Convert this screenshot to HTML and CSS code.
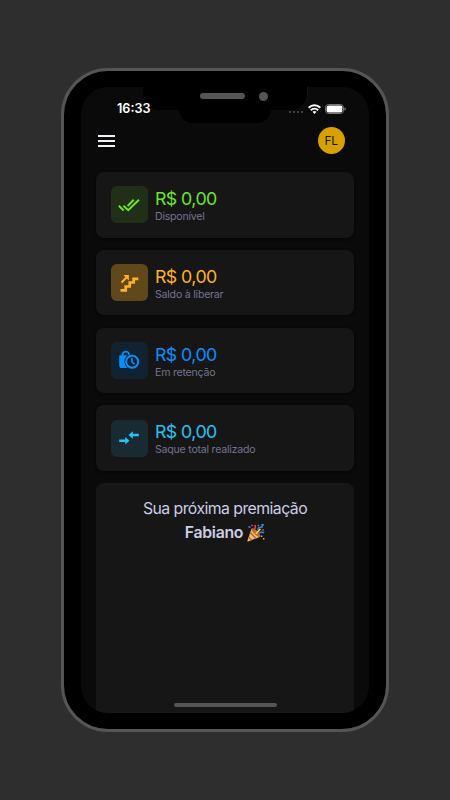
FILE: index.html
```html
<!DOCTYPE html>
<html lang="pt-BR">
<head>
<meta charset="utf-8">
<title>Saldo</title>
<link rel="stylesheet" href="styles.css">
</head>
<body>
<div class="phone">
  <div class="notch-shadow"></div>
  <div class="notch"><span class="speaker"></span><span class="camera"></span></div>
  <div class="screen">
    <div class="status">
      <span class="time">16:33</span>
      <span class="signal"><i></i><i></i><i></i><i></i></span>
      <svg class="wifi" width="13" height="10" viewBox="0 0 12 9" fill="none" stroke="#fff" stroke-width="1.8"><path d="M.6 3.3a7.8 7.8 0 0 1 10.8 0M2.6 5.6a4.9 4.9 0 0 1 6.8 0"/><path d="M6 9 4.2 7.1a2.7 2.7 0 0 1 3.6 0Z" fill="#fff" stroke="none"/></svg>
      <svg class="battery" width="21" height="10" viewBox="0 0 21 10"><rect x=".5" y=".5" width="18" height="9" rx="3" fill="none" stroke="#777"/><rect x="1.6" y="1.5" width="15.8" height="7" rx="2" fill="#fff"/><path d="M19.5 3.2q1.3.5 1.3 1.8t-1.3 1.8z" fill="#888"/></svg>
    </div>
    <header class="topbar">
      <div class="menu"><i></i><i></i><i></i></div>
      <div class="avatar">FL</div>
    </header>
    <main class="cards">
      <section class="card green">
        <div class="icon"><svg width="24" height="24" viewBox="0 0 24 24" fill="none" stroke="currentColor" stroke-width="2"><path d="m1.8 12.7 4.9 4.8M6.5 12.7l4.7 4.5L22 6.8M10.6 13l6.2-6.2"/></svg></div>
        <div class="info"><div class="amount">R$ 0,00</div><div class="label">Disponível</div></div>
      </section>
      <section class="card amber">
        <div class="icon"><svg width="24" height="24" viewBox="0 0 24 24" fill="none" stroke="currentColor" stroke-width="2.7"><path d="M3.5 19.3h5.2v-3.8h4v-4h4V7.8h4.6"/><path d="m4.5 11.5 5.5-5.5" stroke-width="2"/><path d="M6.3 3.9h5.6v5.6z" fill="currentColor" stroke="none"/></svg></div>
        <div class="info"><div class="amount">R$ 0,00</div><div class="label">Saldo à liberar</div></div>
      </section>
      <section class="card blue">
        <div class="icon"><svg width="24" height="24" viewBox="0 0 24 24"><path d="M2.5 7.5h12V20H4.5q-2 0-2-2z" fill="currentColor"/><path d="M5.4 8.5V7a3.4 3.4 0 0 1 6.8 0v1.5" fill="none" stroke="currentColor" stroke-width="1.9"/><circle cx="15.2" cy="13.7" r="7.8" fill="#112331"/><circle cx="15.2" cy="13.7" r="6" fill="none" stroke="currentColor" stroke-width="2"/><path d="M14.9 10v4.2l2.8 2" fill="none" stroke="currentColor" stroke-width="1.6"/><path d="M2.5 7.5h5.8q-2 3-1.7 6.2t2.4 6.3H4.5q-2 0-2-2z" fill="currentColor"/></svg></div>
        <div class="info"><div class="amount">R$ 0,00</div><div class="label">Em retenção</div></div>
      </section>
      <section class="card cyan">
        <div class="icon"><svg width="24" height="24" viewBox="0 0 24 24" fill="currentColor"><path d="M2.2 13.5h6v-2.6l4.3 3.8-4.3 3.8v-2.6h-6zM21.8 7.8h-6V5.2L11.5 9l4.3 3.8v-2.6h6z"/></svg></div>
        <div class="info"><div class="amount">R$ 0,00</div><div class="label">Saque total realizado</div></div>
      </section>
      <section class="prize">
        <div class="title">Sua próxima premiação</div>
        <div class="name"><span>Fabiano</span>
          <svg width="18" height="18" viewBox="0 0 18 18"><path d="M4.7 4.4 13 12.7 1 17.6q-.8.1-.6-.8z" fill="#ffc52f"/><path d="m3.2 8.5 5.9 6.2M1.7 13l3 3.2" stroke="#a45ab9" stroke-width="1.6"/><ellipse cx="9" cy="8.6" rx="2" ry="5.8" transform="rotate(-45 9 8.6)" fill="#b76f23"/><path d="m8.3 9.2 4.5-5 1.2 1.3-4.3 4.6z" fill="#fad54a"/><g fill="none" stroke-width="1.6"><path d="M7.1 5.6q2.2-2.4.6-4.5" stroke="#e83e55"/><path d="M11 6q0-3 2.5-2.7T15 .6h2" stroke="#3e7bda"/><path d="M11.5 9.5q2.5-2.3 5.7-.7" stroke="#3e7bda"/><path d="m1.5 2.5 2 1.1" stroke="#3e7bda"/></g><path d="M4.3.7h1.5v1.5H4.3zM15.2 5.3h1.6v1.5h-1.6zM10.6.8h1.5v1.5h-1.5z" fill="#ef4d5c"/><path d="M13.8 11.6h1.5v1.5h-1.5zM16 14h1.4v1.4H16z" fill="#e5b43f"/></svg>
        </div>
      </section>
    </main>
    <div class="home"></div>
  </div>
</div>
</body>
</html>
```

FILE: styles.css
```css
* { box-sizing: border-box; }
body {
  margin: 0;
  height: 800px;
  padding: 68px 0 0 61px;
  background: #2e2e2e;
  font-family: Inter, "Liberation Sans", sans-serif;
  overflow: hidden;
}
svg { display: block; flex: none; }
.phone {
  position: relative;
  width: 328px;
  height: 664px;
  padding: 16px 17px;
  border: 3px solid #555;
  border-radius: 47px;
  background: #000;
}
.screen {
  position: relative;
  display: flex;
  flex-direction: column;
  width: 288px;
  height: 626px;
  border-radius: 27px;
  background: #0a0a0a;
  overflow: hidden;
}
.notch {
  position: absolute;
  z-index: 3;
  left: 79px;
  top: 15px;
  width: 165px;
  height: 24px;
  display: flex;
  align-items: center;
  padding: 0 39px 4px 57px;
  justify-content: space-between;
  background: #000;
  border: solid #141414;
  border-width: 0 1px 0 0;
  border-radius: 0 0 16px 16px;
}
.speaker { width: 45px; height: 6px; border-radius: 3px; background: #555; }
.camera { width: 9px; height: 9px; border-radius: 50%; background: #555; }
.notch-shadow {
  position: absolute;
  z-index: 2;
  left: 115px;
  top: 30px;
  width: 92px;
  height: 21.5px;
  border-radius: 0 0 14px 14px;
  background: #000;
}
.status {
  display: flex;
  align-items: center;
  height: 21px;
  margin-top: 11px;
  padding: 0 23.5px 0 36px;
}
.time { position: relative; z-index: 4; color: #fff; font-size: 12.6px; font-weight: 600; line-height: 23px; }
.signal { display: flex; gap: 2px; margin: 7px 5px 0 auto; }
.signal i { width: 2px; height: 2px; border-radius: 1px; background: #555; }
.wifi { margin-right: 4px; }
.topbar {
  display: flex;
  align-items: center;
  justify-content: space-between;
  height: 27px;
  margin: 8px 24.5px 0 17px;
}
.menu { display: flex; flex-direction: column; gap: 3px; width: 17.3px; }
.menu i { height: 2px; background: #eef1f5; }
.avatar {
  width: 27px;
  height: 27px;
  border-radius: 50%;
  background: #d7a000;
  color: #161616;
  font-size: 12px;
  letter-spacing: -.4px;
  line-height: 27px;
  text-align: center;
}
.cards {
  display: flex;
  flex: 1;
  flex-direction: column;
  gap: 12.3px;
  margin: 18px 15px 0;
}
.card {
  display: flex;
  align-items: center;
  gap: 7px;
  flex: none;
  height: 65.5px;
  padding-left: 15px;
  border-radius: 8px;
  background: #161616;
  box-shadow: 0 1px 3px #050505;
}
.icon {
  display: grid;
  place-items: center;
  width: 37px;
  height: 37px;
  padding-right: 2px;
  border-radius: 6px;
}
.info { padding-top: 3.5px; }
.amount { font-size: 17.8px; line-height: 20px; letter-spacing: -.58px; white-space: nowrap; }
.label { color: #74748c; font-size: 10.6px; line-height: 15px; letter-spacing: -.23px; white-space: nowrap; }
.green { color: #6be528; }
.green .icon { background: #222f18; }
.amber { color: #ffb126; }
.amber .icon { background: #60481b; }
.blue { color: #0690ff; }
.blue .icon { background: #112331; }
.cyan { color: #27c2f3; }
.cyan .icon { background: #182b32; }
.prize {
  flex: 1;
  padding-top: 14px;
  border-radius: 8px 8px 0 0;
  background: #161616;
  color: #cdcde3;
  font-size: 15.8px;
  line-height: 24px;
  text-align: center;
}
.title { letter-spacing: -.54px; white-space: nowrap; }
.name { display: flex; justify-content: center; align-items: center; gap: 4px; font-weight: 600; letter-spacing: -.3px; }
.home {
  position: absolute;
  left: 93px;
  bottom: 6px;
  width: 103px;
  height: 4px;
  border-radius: 2px;
  background: #555;
}
```
